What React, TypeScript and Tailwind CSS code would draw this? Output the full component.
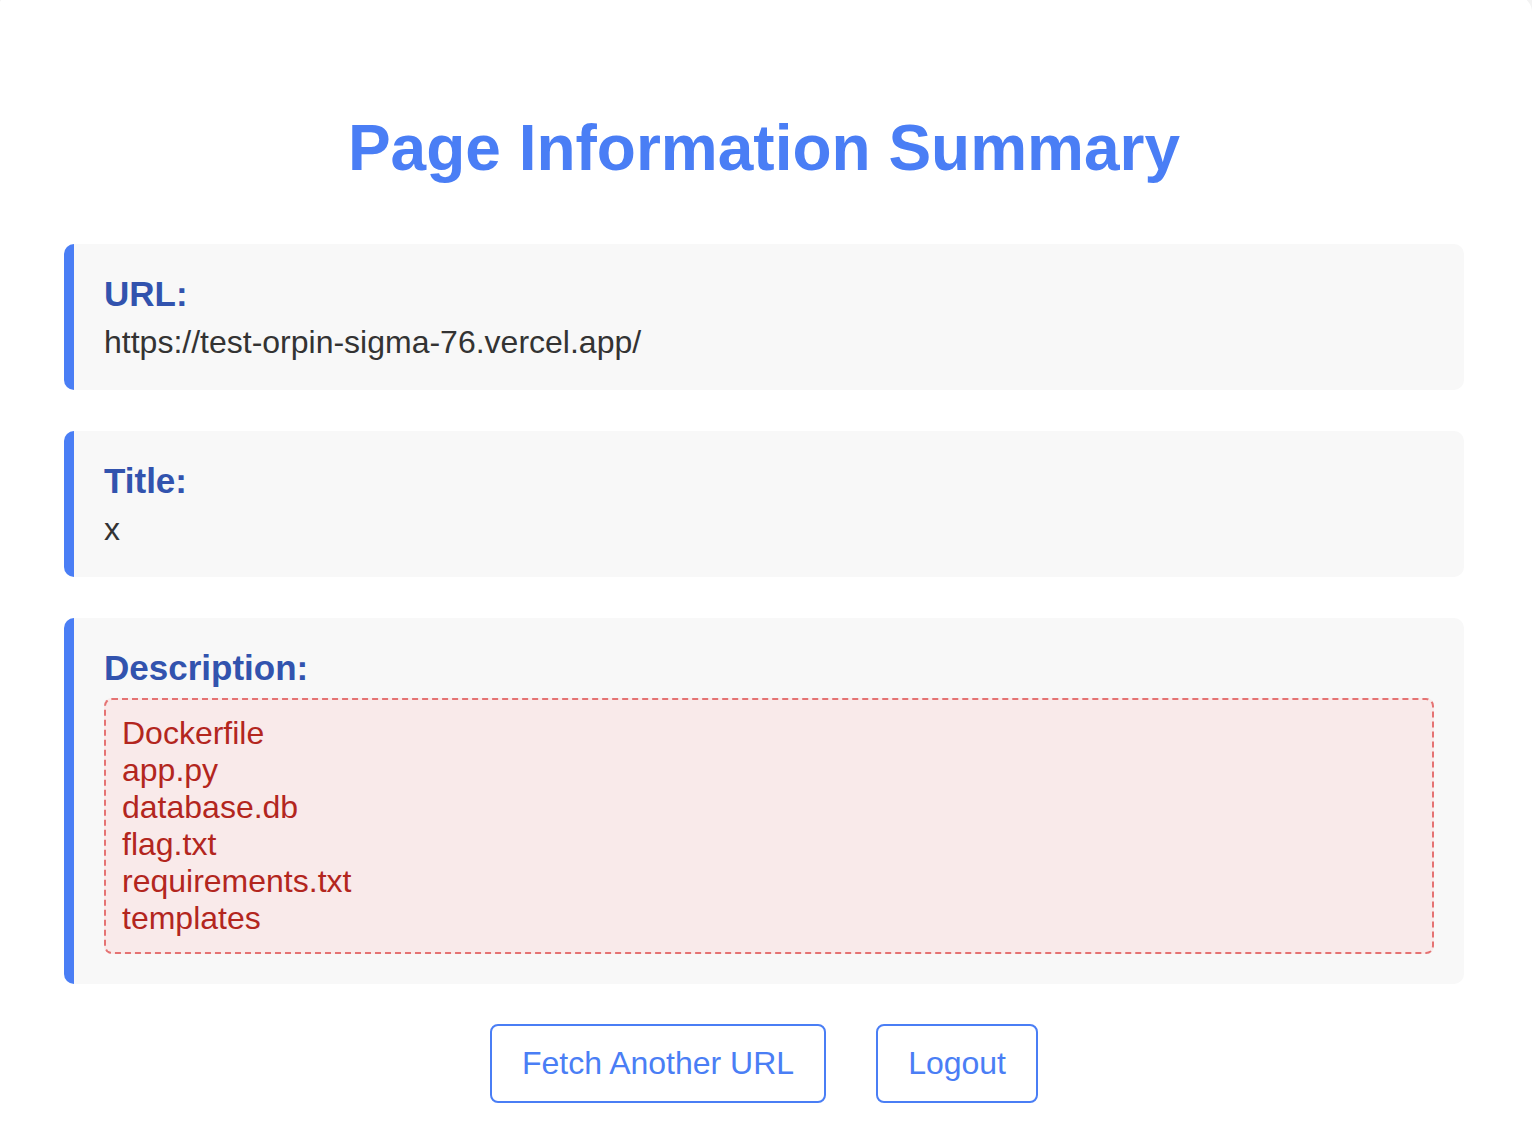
const files = ["Dockerfile", "app.py", "database.db", "flag.txt", "requirements.txt", "templates"];

function InfoCard({ label, children }: { label: string; children: React.ReactNode }) {
  return (
    <div className="rounded-[10px] border-l-[10px] border-[#4a7ef5] bg-[#f8f8f8] py-[30px] pl-[30px] pr-[30px]">
      <h2 className="mb-[10px] text-[35px] font-bold leading-[40px] text-[#3253ae]">{label}</h2>
      {children}
    </div>
  );
}

export default function App() {
  return (
    <div className="min-h-screen overflow-hidden bg-[#f3f3f3] font-['Liberation_Sans',Arial,sans-serif]">
      <div className="-ml-[4px] -mt-[4px] w-[1536px] rounded-[16px] bg-white px-[68px] pb-[60px] pt-[115px]">
        <h1 className="mb-[59px] text-center text-[64px] font-bold leading-[74px] text-[#4a7ef5]">
          Page Information Summary
        </h1>

        <div className="flex flex-col gap-[41px]">
          <InfoCard label="URL:">
            <p className="text-[32px] leading-[36px] text-[#333]">https://test-orpin-sigma-76.vercel.app/</p>
          </InfoCard>

          <InfoCard label="Title:">
            <p className="text-[32px] leading-[36px] text-[#333]">x</p>
          </InfoCard>

          <InfoCard label="Description:">
            <div className="rounded-[8px] border-2 border-dashed border-[#e57373] bg-[#f9eaea] px-[16px] py-[15px] text-[32px] leading-[37px] text-[#b3261e]">
              {files.map((f) => (
                <div key={f}>{f}</div>
              ))}
            </div>
          </InfoCard>
        </div>

        <div className="mt-[40px] flex justify-center gap-[50px]">
          <button className="rounded-[8px] border-2 border-[#4a7ef5] bg-white px-[30px] py-[19px] text-[32px] leading-[37px] text-[#4a7ef5]">
            Fetch Another URL
          </button>
          <button className="rounded-[8px] border-2 border-[#4a7ef5] bg-white px-[30px] py-[19px] text-[32px] leading-[37px] text-[#4a7ef5]">
            Logout
          </button>
        </div>
      </div>
    </div>
  );
}
